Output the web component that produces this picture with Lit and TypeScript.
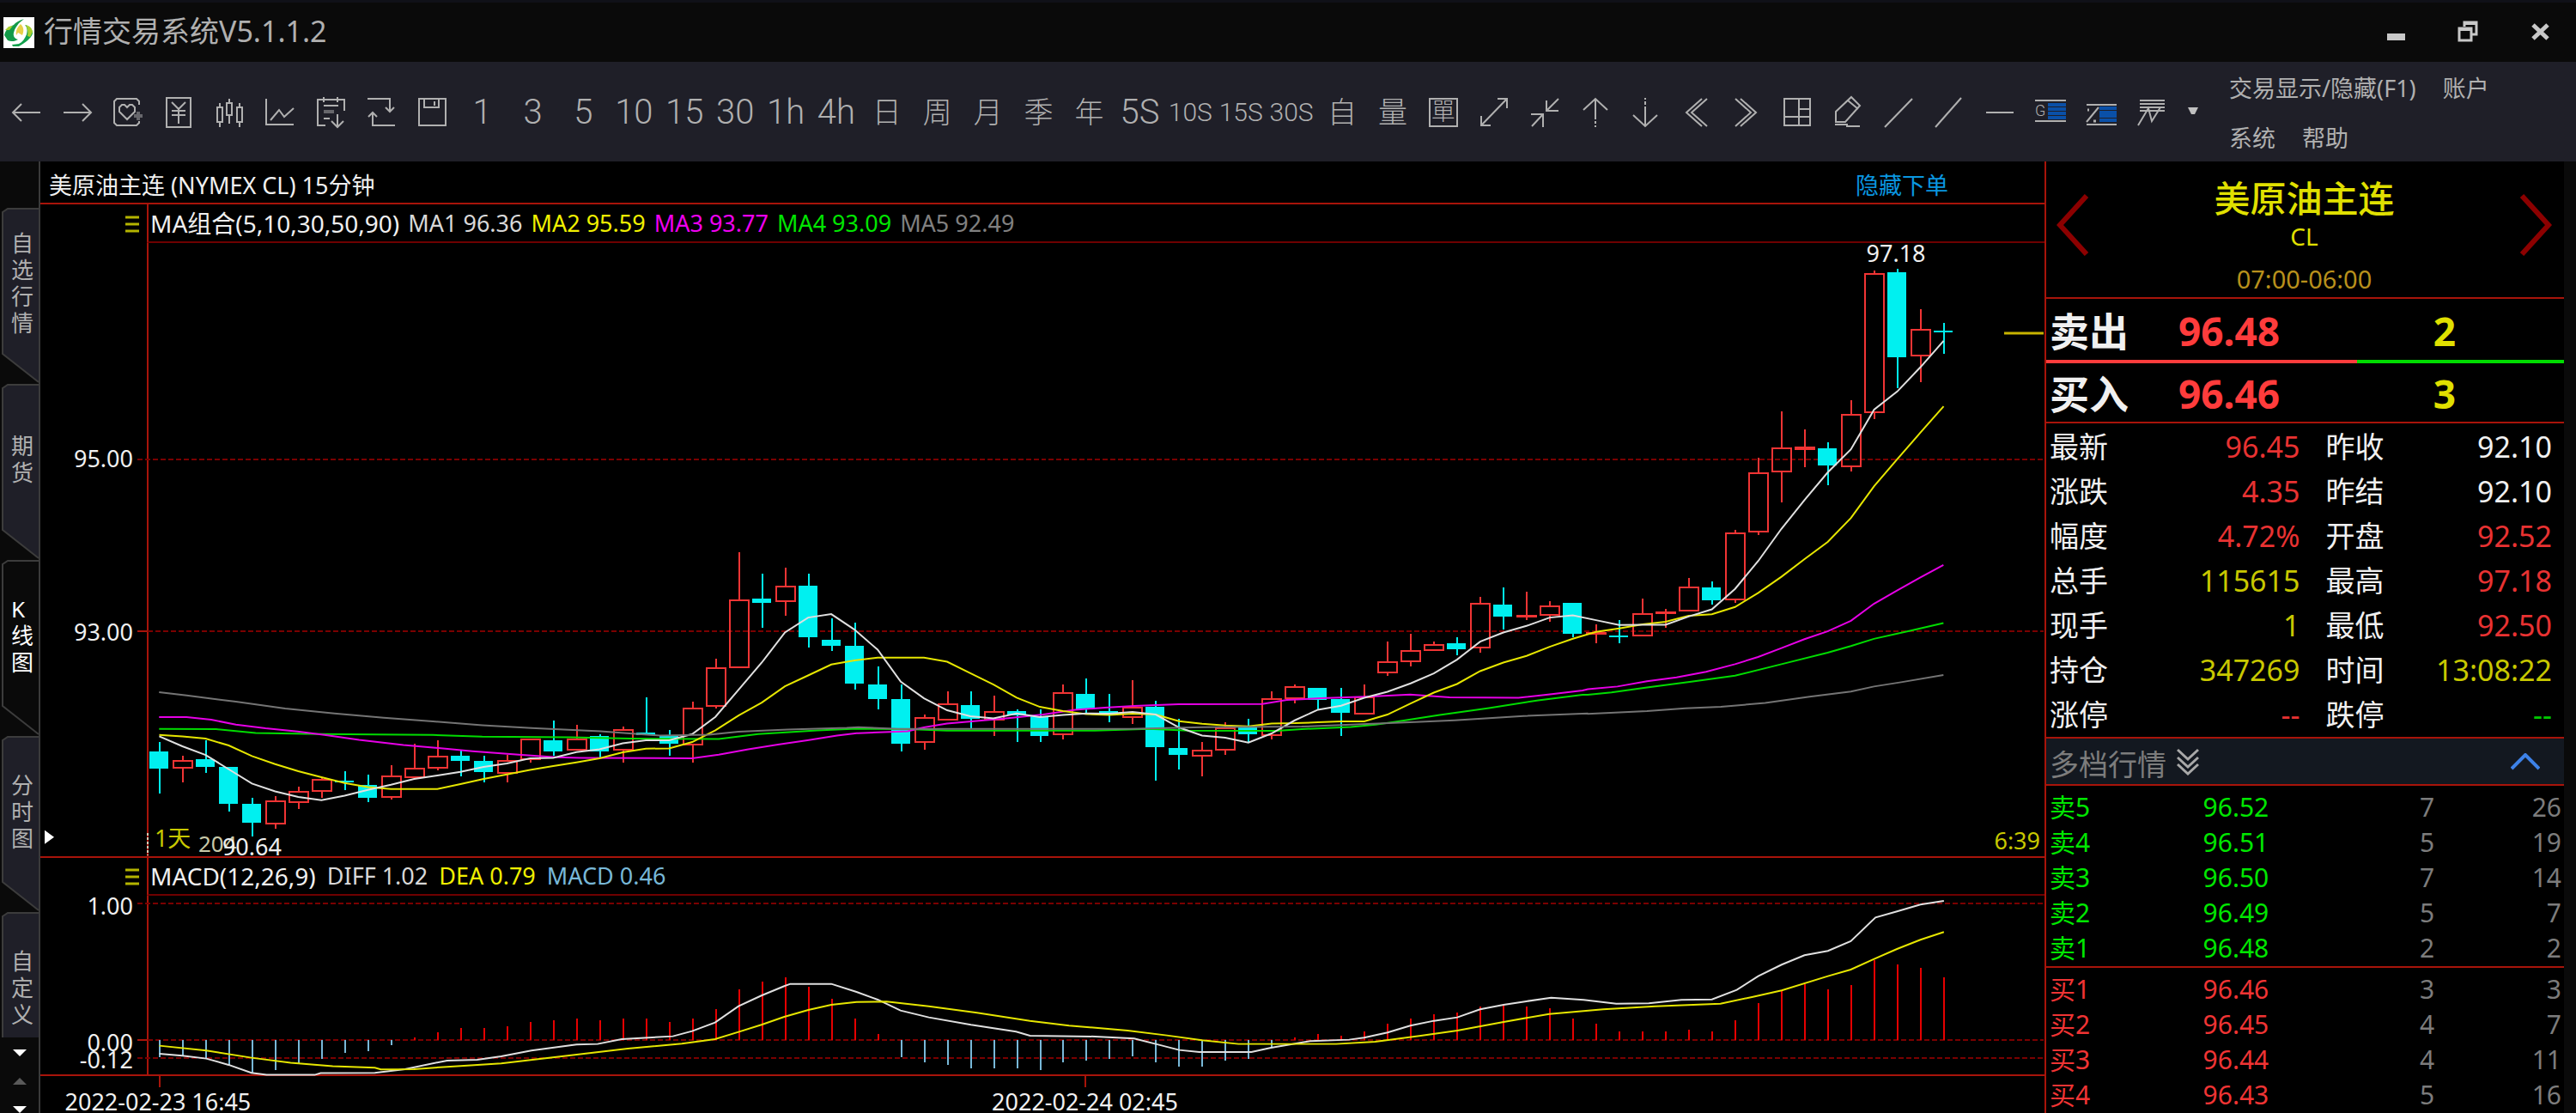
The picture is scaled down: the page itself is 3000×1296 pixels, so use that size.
import { LitElement, html, svg, css, nothing } from "lit";
import { customElement, property, state } from "lit/decorators.js";
import { classMap } from "lit/directives/class-map.js";

/* ---------- chart data ---------- */

type Candle = { up: boolean; top: number; bottom: number; high: number; low: number };
type Point = [number, number];

const FIRST_X = 185.5;
const STEP = 27;
const xAt = (i: number) => FIRST_X + STEP * i;

// Each block of rows is stored on its own grid: page y = base + value / scale.
const candleBlock = (base: number, scale: number, rows: [string, number, number, number, number][]): Candle[] =>
  rows.map(([side, top, bottom, high, low]) => ({
    up: side === "R",
    top: Math.round(base + top / scale),
    bottom: Math.round(base + bottom / scale),
    high: Math.round(base + high / scale),
    low: Math.round(base + low / scale),
  }));

const CANDLES: Candle[] = [
  ...candleBlock(600, 3, [
    ["C", 825, 885, 791, 973], ["R", 855, 885, 840, 933], ["C", 853, 879, 785, 899], ["C", 880, 1007, 880, 1034],
    ["C", 1008, 1075, 988, 1121], ["R", 996, 1080, 982, 1095], ["R", 962, 1005, 948, 1027], ["R", 922, 965, 915, 986],
    ["C", 928, 933, 893, 960], ["C", 941, 987, 907, 1001], ["R", 908, 986, 873, 994], ["R", 882, 917, 798, 917],
    ["R", 841, 885, 785, 892], ["C", 840, 858, 822, 912], ["C", 859, 898, 839, 933], ["R", 855, 904, 837, 934],
    ["R", 780, 854, 780, 865], ["C", 785, 825, 717, 840], ["R", 780, 823, 731, 823], ["C", 770, 824, 765, 848],
    ["R", 747, 823, 738, 865], ["C", 760, 768, 636, 768], ["C", 768, 797, 751, 840], ["R", 672, 803, 651, 865],
    ["R", 531, 668, 502, 675], ["R", 295, 533, 130, 533], ["C", 292, 305, 205, 394], ["R", 246, 304, 184, 352],
    ["C", 245, 427, 205, 461], ["C", 434, 455, 360, 474], ["C", 455, 588, 374, 608], ["C", 590, 643, 529, 677],
  ]),
  ...candleBlock(640, 3, [
    ["C", 523, 678, 470, 706], ["R", 586, 676, 577, 699], ["R", 538, 596, 496, 596], ["C", 543, 591, 496, 627],
    ["R", 565, 597, 510, 652], ["C", 563, 580, 557, 671], ["C", 583, 651, 557, 672], ["R", 497, 649, 470, 664],
    ["C", 503, 557, 450, 575], ["C", 564, 578, 503, 604], ["R", 550, 589, 456, 610], ["C", 550, 691, 529, 806],
    ["C", 692, 718, 591, 767], ["R", 700, 724, 672, 793], ["R", 622, 703, 604, 718], ["C", 622, 644, 591, 676],
    ["R", 519, 650, 496, 662], ["R", 478, 522, 470, 536], ["C", 483, 524, 483, 560], ["C", 523, 571, 483, 652],
    ["R", 512, 575, 470, 575], ["R", 390, 433, 321, 441], ["R", 350, 392, 294, 407], ["R", 330, 353, 320, 353],
    ["C", 328, 347, 307, 368], ["R", 186, 345, 165, 360], ["C", 193, 233, 132, 279], ["R", 228, 238, 146, 246],
    ["R", 194, 231, 180, 252], ["C", 186, 293, 186, 306], ["R", 288, 298, 260, 327], ["C", 300, 306, 246, 327],
  ]),
  ...candleBlock(260, 2.613, [
    ["R", 1186, 1258, 1143, 1258], ["R", 1180, 1189, 1173, 1230], ["R", 1104, 1182, 1079, 1182],
    ["C", 1108, 1148, 1090, 1160], ["R", 940, 1146, 932, 1154], ["R", 757, 940, 714, 948], ["R", 681, 758, 573, 848],
    ["R", 680, 689, 627, 743], ["C", 685, 737, 667, 796], ["R", 581, 741, 538, 754], ["R", 152, 577, 144, 596],
    ["C", 150, 408, 138, 502], ["R", 322, 405, 262, 484], ["C", 326, 331, 302, 397],
  ]),
];

const perCandle = (start: number, base: number, scale: number, values: number[]): Point[] =>
  values.map((v, k) => [xAt(start + k), base + v / scale]);

const free = (x0: number, sx: number, y0: number, sy: number, pts: number[]): Point[] => {
  const out: Point[] = [];
  for (let k = 0; k < pts.length; k += 2) out.push([x0 + pts[k] / sx, y0 + pts[k + 1] / sy]);
  return out;
};

const toPath = (pts: Point[]) => "M" + pts.map(([x, y]) => `${x.toFixed(1)} ${y.toFixed(1)}`).join("L");

const MA: { cls: string; d: string }[] = [
  {
    cls: "ma1",
    d: toPath([
      ...perCandle(0, 600, 3, [773, 808, 838, 888, 938, 965, 985, 996, 980, 960, 942, 922, 910, 897, 880, 868, 850, 848, 828, 818, 797, 787, 787, 765, 705, 610, 515, 410, 358, 346, 400, 470]),
      ...perCandle(32, 640, 3, [462, 520, 562, 583, 590, 573, 586, 578, 573, 574, 568, 577, 622, 650, 658, 675, 643, 597, 560, 546, 518, 497, 468, 433, 385, 322, 290, 267, 238, 230, 247, 264]),
      ...perCandle(64, 260, 2.613, [1222, 1222, 1197, 1175, 1113, 1028, 930, 842, 758, 688, 567, 512, 438, 358]),
    ]),
  },
  {
    cls: "ma2",
    d: toPath([
      ...perCandle(0, 600, 3, [768, 773, 781, 805, 842, 870, 895, 916, 936, 950, 957, 957, 957, 940, 922, 906, 890, 877, 864, 850, 829, 816, 815, 793, 752, 700, 655, 598, 560, 522, 508, 498]),
      ...perCandle(32, 640, 3, [378, 378, 392, 432, 472, 518, 550, 565, 575, 578, 574, 577, 600, 609, 615, 618, 608, 607, 604, 601, 601, 577, 538, 500, 470, 425, 395, 372, 340, 312, 288, 276]),
      ...perCandle(64, 260, 2.613, [1221, 1213, 1195, 1190, 1168, 1125, 1076, 1022, 970, 897, 800, 718, 637, 557]),
    ]),
  },
  {
    cls: "ma3",
    d: toPath([
      ...free(160, 1.742, 600, 3, [44, 706, 100, 706, 150, 715, 200, 732, 260, 745, 325, 756, 380, 768, 450, 785, 540, 803, 600, 812, 680, 825, 780, 838, 850, 846, 900, 848, 1126, 850, 1180, 837, 1240, 818, 1300, 802, 1360, 787, 1420, 770, 1460, 762]),
      ...free(1000, 1.742, 640, 3, [0, 642, 100, 635, 133, 622, 180, 608, 235, 600, 300, 590, 375, 577, 440, 560, 500, 553, 560, 547, 650, 541, 820, 540, 870, 526, 940, 520, 1040, 514, 1120, 507, 1200, 517, 1340, 518, 1400, 507, 1470, 493]),
      ...free(1850, 2.904, 260, 2.613, [0, 1418, 100, 1410, 200, 1394, 300, 1382, 400, 1365, 498, 1342, 576, 1320, 655, 1293, 733, 1266, 811, 1242, 890, 1210, 968, 1158, 1046, 1118, 1125, 1078, 1203, 1040]),
    ]),
  },
  {
    cls: "ma4",
    d: toPath([
      ...free(160, 1.742, 600, 3, [44, 747, 160, 748, 240, 761, 370, 765, 600, 768, 700, 774, 880, 776, 1000, 781, 1180, 782, 1260, 765, 1380, 752, 1460, 746]),
      ...free(1000, 1.742, 640, 3, [0, 627, 100, 628, 180, 633, 480, 633, 590, 627, 670, 633, 850, 634, 900, 628, 1000, 620, 1050, 612, 1090, 602, 1180, 578, 1280, 554, 1380, 527, 1470, 508]),
      ...free(1850, 2.904, 260, 2.613, [0, 1435, 80, 1428, 200, 1413, 350, 1395, 498, 1377, 655, 1342, 811, 1307, 890, 1287, 968, 1265, 1090, 1240, 1203, 1217]),
    ]),
  },
  {
    cls: "ma5",
    d: toPath([
      ...free(160, 1.742, 600, 3, [44, 619, 100, 630, 200, 652, 300, 676, 400, 693, 500, 708, 600, 721, 700, 734, 800, 744, 940, 755, 1060, 770, 1160, 767, 1220, 757, 1320, 749, 1440, 743]),
      ...free(1000, 1.742, 640, 3, [0, 621, 80, 627, 550, 627, 700, 621, 900, 619, 1000, 612, 1130, 603, 1210, 597, 1350, 582, 1480, 573]),
      ...free(1850, 2.904, 260, 2.613, [0, 1493, 200, 1485, 330, 1476, 450, 1472, 600, 1460, 750, 1441, 890, 1425, 968, 1410, 1060, 1397, 1203, 1375]),
    ]),
  },
];

const DIFF = toPath([
  ...free(100, 1.4255, 980, 3, [122, 741, 160, 748, 200, 758, 237, 780, 275, 808, 300, 815, 380, 815, 390, 809, 480, 808, 530, 795, 600, 765, 650, 762, 690, 750, 740, 730, 815, 709, 850, 707, 890, 690, 975, 680, 1007, 662, 1045, 632, 1084, 575, 1122, 538, 1160, 505, 1170, 497, 1238, 497, 1280, 525, 1315, 552, 1353, 590, 1400, 614, 1470, 640, 1545, 664]),
  ...free(1200, 1.3176, 960, 3, [0, 738, 100, 741, 160, 748, 193, 767, 229, 788, 260, 795, 340, 795, 370, 780, 430, 757, 490, 752, 513, 745, 549, 727, 584, 703, 620, 686, 656, 674, 691, 646, 727, 630, 762, 618, 800, 605, 850, 613, 900, 626, 950, 625, 1000, 613, 1047, 611, 1085, 578, 1118, 530, 1154, 490, 1189, 457, 1225, 442, 1260, 408, 1298, 325, 1331, 304, 1367, 280, 1403, 267]),
]);
const DEA = toPath([
  ...free(100, 1.4255, 980, 3, [122, 713, 200, 730, 275, 755, 340, 773, 410, 785, 480, 790, 490, 796, 545, 795, 600, 787, 690, 775, 800, 748, 900, 723, 990, 706, 1045, 690, 1084, 665, 1122, 640, 1160, 612, 1200, 588, 1238, 570, 1280, 560, 1330, 559, 1400, 575, 1480, 598]),
  ...free(1200, 1.3176, 960, 3, [0, 686, 60, 703, 150, 720, 210, 737, 264, 754, 320, 767, 470, 767, 530, 759, 600, 738, 656, 720, 727, 690, 797, 662, 880, 646, 960, 635, 1060, 626, 1110, 602, 1154, 580, 1225, 530, 1260, 507, 1296, 470, 1331, 435, 1367, 403, 1403, 376]),
]);

const ZERO_Y = 1211;
const MACD_BARS: number[] = [
  ...[752, 750, 757, 780, 808, 798, 773, 758, 739, 731, 710, 684, 665, 650, 650, 644, 631, 624, 617, 624, 617, 617, 630, 617, 584, 516, 488, 475, 508, 549, 617, 671, 752, 772, 779, 792, 792, 792].map((v) => 980 + v / 3),
  ...[858, 831, 825, 819, 811, 831, 845, 845, 825, 819, 780, 745, 731, 738, 724, 697, 677, 663, 656, 636, 631, 636, 643, 677, 697, 724, 724, 724, 717, 724, 684, 624, 580, 557, 576, 562, 475, 488, 501, 535].map((v) => 960 + v / 3),
];

/* ---------- toolbar ---------- */

type Tool = { name: string; text?: string; boxed?: boolean; icon?: unknown };

const t = (text: string, boxed = false): Tool => ({ name: text, text, boxed });
const p = (name: string, d: string): Tool => ({ name, icon: svg`<path d=${d} />` });

const TOOLS: Tool[] = [
  p("后退", "M34 18H2M12 8L2 18L12 28"),
  p("前进", "M2 18H34M24 8L34 18L24 28"),
  {
    name: "加自选",
    icon: svg`<path d="M31 9V5L28 2H5L2 5V30L5 33H28L31 30V28"/><path d="M17 26L8 17V12L11 9H14L17 12L20 9H23L26 12V17Z"/><path class="dim" d="M30 17V27M25 22H35"/>`,
  },
  p("报价", "M4 1H32V35H4ZM10 6L18 14L26 6M18 14V31M10 16H26M10 21H26"),
  p("K线", "M7 7V12M4 12H10V29H4ZM7 29V35M18 2V7M15 7H21V21H15ZM18 21V31M30 7V12M27 12H33V29H27ZM30 29V35"),
  p("分时", "M2 2V32H34M7 27L17 15L23 23L34 13"),
  {
    name: "下载",
    icon: svg`<path d="M12 33H3V3H34V16M10 0V6M26 0V6M10 10H27M26 20V35M19 28L26 35L33 28M10 25H17"/><path class="dim" d="M10 17H22"/>`,
  },
  p("刷新", "M2 2H28V17M23 12L28 17L33 12M34 33H8V18M3 23L8 18L13 23"),
  p("保存", "M3 2H34V33H3ZM9 2V12H26V2M21 5V10"),
  ...["1", "3", "5", "10", "15", "30", "1h", "4h", "日", "周", "月", "季", "年", "5S", "10S", "15S", "30S", "自", "量"].map((s) => t(s)),
  t("單", true),
  p("放大", "M3 33L33 2M22 2H33V13M3 22V33H14"),
  p("缩小", "M34 2L20 16M20 4V16H34M3 34L16 20M2 20H16V35"),
  p("上移", "M18 2V26M18 28V31M18 33V35M4 15L18 2L32 15"),
  p("下移", "M18 1V3M18 5V9M18 11V34M4 21L18 34L32 21"),
  p("左翻", "M25 2L7 18L25 34M31 2L13 18L31 34"),
  p("右翻", "M11 2L29 18L11 34M5 2L23 18L5 34"),
  p("多窗", "M3 2H33V33H3ZM20 2V33M3 23H33M20 14H33"),
  p("画笔", "M22 0L32 10L15 29H4V17ZM18 4L30 14M3 32H17V34H32"),
  p("线段", "M2 35L34 2"),
  p("直线", "M2 35L32 1"),
  p("水平线", "M2 18H34"),
  {
    name: "黄金分割",
    icon: svg`<path d="M0 4H36M0 28H36"/><path class="blue" d="M15 9H36M15 14H36M15 19H36M15 24H36"/><text x="0" y="22">G</text>`,
  },
  {
    name: "百分比线",
    icon: svg`<path d="M1 9H36M1 32H36M1 29L15 12"/><path class="blue" d="M16 13H36M16 18H36M16 22H36M16 27H36"/><path class="thin" d="M2 15H4M9 28H12"/>`,
  },
  p("波浪线", "M4 4H33M4 8H33M4 12H33M4 16H33M2 33L14 13L18 28L28 12"),
];

/* ---------- quote data ---------- */

const STATS: [string, string, string, string, string, string][] = [
  ["最新", "96.45", "red", "昨收", "92.10", "white"],
  ["涨跌", "4.35", "red", "昨结", "92.10", "white"],
  ["幅度", "4.72%", "red", "开盘", "92.52", "red"],
  ["总手", "115615", "yellow", "最高", "97.18", "red"],
  ["现手", "1", "yellow", "最低", "92.50", "red"],
  ["持仓", "347269", "yellow", "时间", "13:08:22", "yellow"],
  ["涨停", "--", "red", "跌停", "--", "green"],
];

const ASKS = [
  ["卖5", "96.52", "7", "26"],
  ["卖4", "96.51", "5", "19"],
  ["卖3", "96.50", "7", "14"],
  ["卖2", "96.49", "5", "7"],
  ["卖1", "96.48", "2", "2"],
];
const BIDS = [
  ["买1", "96.46", "3", "3"],
  ["买2", "96.45", "4", "7"],
  ["买3", "96.44", "4", "11"],
  ["买4", "96.43", "5", "16"],
];

const reset = css`
  * {
    box-sizing: border-box;
  }
  button {
    margin: 0;
    padding: 0;
    border: 0;
    background: none;
    color: inherit;
    font: inherit;
    cursor: pointer;
  }
  svg {
    display: block;
  }
`;

/* ---------- title bar and toolbar ---------- */

@customElement("top-bar")
class TopBar extends LitElement {
  static styles = [
    reset,
    css`
      :host {
        display: block;
        color: #b0b0b0;
      }
      .title {
        display: flex;
        align-items: center;
        height: 72px;
        padding: 0 30px 0 4px;
        border-top: 3px solid #101118;
        background: #0a0a0a;
        font-size: 34px;
      }
      .logo {
        width: 36px;
        height: 36px;
        margin-right: 11px;
      }
      .name {
        flex: 1;
        margin: 0;
        font-size: 34px;
        line-height: 44px;
        font-weight: 400;
        white-space: nowrap;
        padding-bottom: 4px;
      }
      .window {
        display: flex;
        gap: 60px;
        padding-bottom: 4px;
      }
      .window svg {
        width: 24px;
        height: 26px;
        fill: none;
        stroke: #c8c8c8;
        stroke-width: 3;
      }
      .tools {
        display: flex;
        align-items: stretch;
        height: 116px;
        background: #1f1f28;
      }
      .icons {
        flex: 1;
        display: grid;
        grid-template-columns: repeat(43, minmax(0, 1fr));
        align-items: center;
        padding: 2px 0 0 2px;
      }
      .icons button {
        display: flex;
        align-items: center;
        justify-content: center;
        height: 60px;
        white-space: nowrap;
        font-family: Roboto, "Noto Sans CJK SC", sans-serif;
        font-size: 34px;
        font-weight: 300;
        line-height: 40px;
      }
      .icons .latin {
        font-size: 40px;
      }
      .icons .wide {
        font-size: 30px;
      }
      .icons svg {
        width: 36px;
        height: 36px;
        overflow: visible;
        fill: none;
        stroke: #b0b0b0;
        stroke-width: 2;
      }
      .icons .dim {
        opacity: 0.5;
        stroke-width: 4;
      }
      .icons .thin {
        stroke-width: 3;
      }
      .icons .blue {
        stroke: #0a50a8;
        stroke-width: 4;
      }
      .icons text {
        fill: #b0b0b0;
        stroke: none;
        font-size: 18px;
      }
      .boxed {
        display: block;
        width: 34px;
        height: 34px;
        border: 2px solid #b0b0b0;
        font-size: 28px;
        line-height: 29px;
        text-align: center;
      }
      .more {
        width: 38px;
      }
      .more svg {
        width: 12px;
        height: 10px;
        margin: 0 auto;
        fill: #c0c0c0;
      }
      .menu {
        display: flex;
        flex-wrap: wrap;
        align-content: flex-start;
        column-gap: 31px;
        width: 427px;
        padding: 2px 60px 0 23px;
        font-size: 27px;
        line-height: 58px;
      }
      .menu a {
        color: inherit;
        text-decoration: none;
        white-space: nowrap;
      }
    `,
  ];

  render() {
    return html`
      <header class="title">
        <svg class="logo" viewBox="0 0 36 36" aria-hidden="true">
          <rect width="36" height="36" fill="#fff" />
          <path fill="#129a48" d="M24 2C18 4 14 6 12 9 6 11 2 16 1 21l4 6c4 2 9 1 12-1-4-1-6-4-5-8 1-5 4-8 6-11z" />
          <path fill="#12a04c" d="M25 9c3 3 3 7 2 11-2 5-5 9-9 11l-8 1 1 2h7c8-5 14-9 16-15 0-5-4-9-9-10z" />
          <path fill="#a8d030" d="M26 9c4 1 7 3 8 8l-3 6-3-1c1-5 0-9-2-13zM2 15l4-4 5-1-4 5z" />
          <path fill="#e8d048" d="M20 8c4 4 4 8 2 13l-5-3-2 3c-1-5 1-9 5-13z" />
        </svg>
        <h1 class="name">行情交易系统V5.1.1.2</h1>
        <div class="window">
          <button aria-label="最小化"><svg viewBox="0 0 24 26"><path d="M2 20H23" stroke-width="8" /></svg></button>
          <button aria-label="还原">
            <svg viewBox="0 0 24 26"><path d="M8 8V3H22V17H17M2 10H16V24H2Z" /><path d="M2 11H16M8 4H22" stroke-width="4" /></svg>
          </button>
          <button aria-label="关闭"><svg viewBox="0 0 24 26"><path d="M4 6L21 22M21 6L4 22" stroke-width="5" /></svg></button>
        </div>
      </header>
      <div class="tools">
        <div class="icons">
          ${TOOLS.map(
            (tool) => html`<button
              title=${tool.name}
              class=${classMap({
                latin: /^\w{1,2}$/.test(tool.text ?? ""),
                wide: (tool.text?.length ?? 0) > 2,
              })}
            >
              ${tool.text
                ? html`<span class=${classMap({ boxed: !!tool.boxed })}>${tool.text}</span>`
                : html`<svg viewBox="0 0 36 36" aria-hidden="true">${tool.icon}</svg>`}
            </button>`
          )}
        </div>
        <button class="more" aria-label="更多工具"><svg viewBox="0 0 12 10"><path d="M0 0H12L8 8H4Z" /></svg></button>
        <nav class="menu">
          <a href="#trade">交易显示/隐藏(F1)</a>
          <a href="#account">账户</a>
          <a href="#system">系统</a>
          <a href="#help">帮助</a>
        </nav>
      </div>
    `;
  }
}

/* ---------- left tabs ---------- */

@customElement("side-tabs")
class SideTabs extends LitElement {
  @state() private active = 2;
  private tabs = ["自选行情", "期货", "K线图", "分时图", "自定义"];

  static styles = [
    reset,
    css`
      :host {
        display: flex;
        flex-direction: column;
        width: 47px;
        background: #0a0a0a;
        color: #b0b0b0;
      }
      .list {
        flex: 1 1 0;
        min-height: 0;
        display: flex;
        flex-direction: column;
        overflow: hidden;
        padding-top: 54px;
        border-right: 2px solid #3a3a3a;
      }
      .tab {
        flex: none;
        display: grid;
        width: 45px;
        height: 205px;
      }
      .tab svg,
      .label {
        grid-area: 1 / 1;
      }
      .tab svg {
        width: 45px;
        height: 205px;
        fill: #1f1f28;
        stroke: #3c3c3c;
        stroke-width: 2;
      }
      .label {
        place-self: start end;
        display: flex;
        align-items: center;
        width: 32px;
        height: 176px;
        padding-right: 6px;
        font-size: 26px;
        line-height: 31px;
        text-align: left;
        word-break: break-all;
      }
      .on {
        color: #fff;
      }
      .on svg {
        fill: #0a0a0a;
      }
      .scroll {
        display: flex;
        flex-direction: column;
        align-items: center;
        justify-content: space-between;
        height: 88px;
        padding-top: 14px;
        border-right: 2px solid #3a3a3a;
      }
      .scroll svg {
        width: 16px;
        height: 8px;
        fill: #fff;
      }
      .scroll .off {
        fill: #5a5a5a;
      }
    `,
  ];

  render() {
    return html`
      <nav class="list">
        ${this.tabs.map(
          (tab, i) => html`<button
            class=${classMap({ tab: true, on: i === this.active })}
            aria-pressed=${i === this.active}
            @click=${() => (this.active = i)}
          >
            <svg viewBox="0 0 45 205" aria-hidden="true"><path d="M45 1H9L3 5V170L45 203" /></svg>
            <span class="label"><span>${tab}</span></span>
          </button>`
        )}
      </nav>
      <div class="scroll">
        <button aria-label="向下"><svg viewBox="0 0 16 8"><path d="M0 0H16L8 8Z" /></svg></button>
        <button aria-label="向上"><svg class="off" viewBox="0 0 16 8"><path d="M0 8H16L8 0Z" /></svg></button>
        <button aria-label="到底"><svg viewBox="0 0 16 8"><path d="M0 0H16L8 8Z" /></svg></button>
      </div>
    `;
  }
}

/* ---------- charts ---------- */

@customElement("chart-pane")
class ChartPane extends LitElement {
  static styles = [
    reset,
    css`
      :host {
        display: block;
        min-width: 0;
        background: #000;
        color: #f0f0f0;
        font-size: 27px;
      }
      .head {
        display: flex;
        align-items: center;
        justify-content: space-between;
        height: 50px;
        padding: 4px 112px 0 10px;
        border-bottom: 2px solid #a8140a;
        white-space: nowrap;
      }
      .head h2 {
        margin: 0;
        font-size: 27px;
        font-weight: 400;
      }
      .order {
        color: #0a96e0;
      }
      .legend {
        display: grid;
        grid-template-columns: 124px minmax(0, 1fr);
        height: 45px;
      }
      .legend.lower {
        height: 44px;
      }
      .grip {
        justify-self: end;
        align-self: center;
        width: 16px;
        height: 20px;
        margin-right: 9px;
      }
      .grip svg {
        width: 16px;
        height: 20px;
        stroke: #b4b400;
        stroke-width: 3;
      }
      .items {
        display: flex;
        align-items: center;
        gap: 10px;
        padding-left: 2px;
        border-left: 2px solid #a8140a;
        border-bottom: 2px solid #6e0000;
        line-height: 42px;
        white-space: nowrap;
        overflow: hidden;
      }
      .lower .items {
        gap: 13px;
      }
      .first {
        font-size: 28px;
      }
      .plot {
        width: 100%;
        height: auto;
        overflow: visible;
      }
      .plot text {
        fill: #f0f0f0;
        font-size: 27px;
      }
      .end {
        text-anchor: end;
      }
      .mid {
        text-anchor: middle;
      }
      .frame,
      .axis,
      .dash,
      .dots,
      .up,
      .down,
      .solid,
      .bar-up,
      .bar-down {
        shape-rendering: crispEdges;
      }
      .frame,
      .axis {
        stroke: #a8140a;
        stroke-width: 2;
      }
      .dash {
        stroke: #7a0000;
        stroke-width: 2;
        stroke-dasharray: 6 3;
      }
      .dots {
        stroke: #d8c8b0;
        stroke-width: 2;
        stroke-dasharray: 3 2;
      }
      .mark {
        stroke: #c8b400;
        stroke-width: 3;
      }
      .up {
        fill: none;
        stroke: #f03434;
        stroke-width: 2;
      }
      .solid {
        fill: #f03434;
      }
      .down {
        fill: #00f0f0;
        stroke: #00f0f0;
        stroke-width: 2;
      }
      .body {
        stroke: none;
      }
      .line {
        fill: none;
        stroke-width: 2;
      }
      .line.ma1 {
        stroke: #e0e0e0;
      }
      .line.ma2 {
        stroke: #e6e600;
      }
      .line.ma3 {
        stroke: #e600e6;
      }
      .line.ma4 {
        stroke: #00dc00;
      }
      .line.ma5 {
        stroke: #747474;
      }
      .bar-up {
        stroke: #e60000;
        stroke-width: 2;
      }
      .bar-down {
        stroke: #78b8d8;
        stroke-width: 2;
      }
      .c1 {
        color: #d8d8d8;
      }
      .c2 {
        color: #f0f000;
      }
      .c3 {
        color: #f000f0;
      }
      .c4 {
        color: #00e600;
      }
      .c5 {
        color: #808080;
      }
      .c6 {
        color: #78b8d8;
      }
      .plot .gold {
        fill: #c8c800;
      }
      .plot .count {
        fill: #c8c8a8;
        font-size: 26px;
      }
      .arrow {
        fill: #fff;
      }
      .divider {
        border-top: 2px solid #a8140a;
      }
    `,
  ];

  private candle(c: Candle, i: number) {
    const x = Math.round(xAt(i));
    const h = c.bottom - c.top;
    if (!c.up) {
      return svg`<g class="down"><path d="M${x} ${c.high}V${c.low}" /><rect class="body" x=${x - 12} y=${c.top} width="22" height=${Math.max(2, h)} /></g>`;
    }
    const wick = svg`<path class="up" d="M${x} ${c.high}V${c.top}M${x} ${c.bottom}V${c.low}" />`;
    return h < 5
      ? svg`${wick}<rect class="solid" x=${x - 12} y=${c.top} width="24" height=${h} />`
      : svg`${wick}<rect class="up" x=${x - 11} y=${c.top + 1} width="22" height=${h - 2} />`;
  }

  private grip() {
    return html`<button class="grip" aria-label="指标设置">
      <svg viewBox="0 0 16 20"><path d="M0 2H16M0 10H16M0 18H16" /></svg>
    </button>`;
  }

  render() {
    return html`
      <div class="head">
        <h2>美原油主连 (NYMEX CL) 15分钟</h2>
        <button class="order">隐藏下单</button>
      </div>
      <div class="legend">
        ${this.grip()}
        <div class="items">
          <span class="first">MA组合(5,10,30,50,90)</span>
          <span class="c1">MA1 96.36</span>
          <span class="c2">MA2 95.59</span>
          <span class="c3">MA3 93.77</span>
          <span class="c4">MA4 93.09</span>
          <span class="c5">MA5 92.49</span>
        </div>
      </div>
      <svg class="plot" viewBox="47 283 2335 714" role="img" aria-label="K线图">
        <path class="axis" d="M172 283V997M160 735H172" />
        <path class="dash" d="M160 535H2381M172 735H2381" />
        <path class="dots" d="M172 970V996" />
        <text class="end" x="155" y="544">95.00</text>
        <text class="end" x="155" y="746">93.00</text>
        ${CANDLES.map((c, i) => this.candle(c, i))}
        ${MA.slice()
          .reverse()
          .map((m) => (m.cls === "ma5" ? nothing : svg`<path class="line ${m.cls}" d=${m.d} />`))}
        <path class="line ma5" d=${MA[4].d} />
        <path class="mark" d="M2335 388H2381" />
        <path class="arrow" d="M52 967L63 975L52 983Z" />
        <text class="gold" x="180" y="986">1天</text>
        <text class="count" x="231" y="992">204</text>
        <text x="259" y="996">90.64</text>
        <text class="mid" x="2209" y="305">97.18</text>
        <text class="end gold" x="2377" y="989">6:39</text>
      </svg>
      <div class="divider"></div>
      <div class="legend lower">
        ${this.grip()}
        <div class="items">
          <span class="first">MACD(12,26,9)</span>
          <span class="c1">DIFF 1.02</span>
          <span class="c2">DEA 0.79</span>
          <span class="c6">MACD 0.46</span>
        </div>
      </div>
      <svg class="plot" viewBox="47 1043 2335 253" role="img" aria-label="MACD">
        <path class="axis" d="M172 1043V1252M160 1211H172M186 1252V1266M1265 1252V1266" />
        <path class="frame" d="M47 1252H2382" />
        <path class="dash" d="M160 1052H2381M172 1211H2381M160 1232H2381" />
        <text class="end" x="155" y="1065">1.00</text>
        <text class="end" x="155" y="1224">0.00</text>
        <text class="end" x="155" y="1244">-0.12</text>
        ${MACD_BARS.map(
          (y, i) => svg`<path class=${y < ZERO_Y ? "bar-up" : "bar-down"} d="M${Math.round(xAt(i))} ${ZERO_Y}V${Math.round(y)}" />`
        )}
        <path class="line ma1" d=${DIFF} />
        <path class="line ma2" d=${DEA} />
        <text class="mid" x="184" y="1293">2022-02-23 16:45</text>
        <text class="mid" x="1264" y="1293">2022-02-24 02:45</text>
      </svg>
    `;
  }
}

/* ---------- quote panel ---------- */

@customElement("quote-panel")
class QuotePanel extends LitElement {
  @property({ type: Boolean }) collapsed = false;

  static styles = [
    reset,
    css`
      :host {
        display: block;
        border-left: 2px solid #a8140a;
        background: #000;
        color: #f0f0f0;
        font-size: 34px;
      }
      .head {
        display: flex;
        align-items: center;
        justify-content: space-between;
        height: 160px;
        padding: 0 14px 0 12px;
        border-bottom: 2px solid #a8140a;
      }
      .head svg {
        width: 38px;
        height: 72px;
        margin-top: -10px;
        fill: none;
        stroke: #8c0000;
        stroke-width: 6;
      }
      .names {
        display: flex;
        flex-direction: column;
        align-items: center;
        padding-top: 20px;
        color: #e0e000;
        font-size: 28px;
        line-height: 38px;
      }
      .names h2 {
        margin: 0;
        font-family: "Liberation Serif", "Noto Sans CJK SC", serif;
        font-size: 42px;
        line-height: 46px;
        font-weight: 500;
      }
      .hours {
        padding-top: 12px;
        color: #b8901c;
        font-size: 29px;
      }
      .deal {
        display: grid;
        grid-template-columns: 150px minmax(0, 1fr) 278px;
        align-items: center;
        height: 71px;
        padding-top: 2px;
        padding-left: 4px;
        font-size: 46px;
        line-height: 60px;
        font-weight: 700;
      }
      .deal.buy {
        height: 70px;
        border-bottom: 2px solid #a8140a;
      }
      .price {
        color: #ff3c3c;
      }
      .count {
        color: #e0e000;
        text-align: center;
      }
      .ratio {
        display: flex;
        height: 4px;
        background: #00dc00;
      }
      .ratio i {
        width: 60%;
        background: #ff3c3c;
      }
      table {
        width: 100%;
        border-collapse: collapse;
        table-layout: fixed;
      }
      th,
      td {
        padding: 0;
        font-weight: 400;
        text-align: right;
        white-space: nowrap;
      }
      th {
        text-align: left;
      }
      .stats {
        padding-top: 1px;
        border-bottom: 2px solid #a8140a;
      }
      .stats th,
      .stats td {
        height: 52px;
        line-height: 50px;
      }
      .stats th {
        width: 25%;
        padding-left: 4px;
      }
      .stats td {
        width: 24%;
      }
      .stats td + th {
        padding-left: 30px;
      }
      .stats td + th + td {
        width: 26%;
        padding-right: 14px;
      }
      .depth {
        display: flex;
        align-items: center;
        height: 55px;
        padding: 0 28px 0 4px;
        border-bottom: 2px solid #a8140a;
        background: #131820;
        color: #7c7c7c;
      }
      .depth h3 {
        margin: 0;
        padding-top: 6px;
        font-size: 34px;
        line-height: 44px;
        font-weight: 400;
      }
      .depth svg {
        fill: none;
      }
      .more {
        width: 26px;
        height: 32px;
        margin-left: 12px;
        stroke: #a8a8a8;
        stroke-width: 3;
      }
      .fold {
        margin-left: auto;
      }
      .fold svg {
        width: 34px;
        height: 20px;
        stroke: #3d82e8;
        stroke-width: 4;
      }
      .book {
        padding: 4px 0 1px;
        font-size: 30px;
      }
      .book th,
      .book td {
        height: 41px;
        line-height: 40px;
        color: #7c7c7c;
      }
      .book th {
        width: 16%;
        padding-left: 4px;
      }
      .book td:nth-child(2) {
        width: 27%;
      }
      .book td:nth-child(3) {
        width: 32%;
      }
      .book td:nth-child(4) {
        padding-right: 3px;
      }
      .asks {
        border-bottom: 2px solid #a8140a;
      }
      .book.asks th,
      .book.asks td:nth-child(2) {
        color: #00e600;
      }
      .book.bids th,
      .book.bids td:nth-child(2) {
        color: #f03434;
      }
      .red {
        color: #e83232;
      }
      .yellow {
        color: #c8c800;
      }
      .green {
        color: #00c800;
      }
      .white {
        color: #f0f0f0;
      }
    `,
  ];

  private book(cls: string, rows: string[][]) {
    return html`<div class="book ${cls}">
      <table>
        ${rows.map(
          ([label, price, count, total]) =>
            html`<tr>
              <th scope="row">${label}</th>
              <td>${price}</td>
              <td>${count}</td>
              <td>${total}</td>
            </tr>`
        )}
      </table>
    </div>`;
  }

  render() {
    return html`
      <section class="head">
        <button aria-label="上一个"><svg viewBox="0 0 38 72"><path d="M35 2L4 36L35 70" /></svg></button>
        <div class="names">
          <h2>美原油主连</h2>
          <span>CL</span>
          <span class="hours">07:00-06:00</span>
        </div>
        <button aria-label="下一个"><svg viewBox="0 0 38 72"><path d="M3 2L34 36L3 70" /></svg></button>
      </section>
      <div class="deal">
        <span>卖出</span><span class="price">96.48</span><span class="count">2</span>
      </div>
      <div class="ratio"><i></i></div>
      <div class="deal buy">
        <span>买入</span><span class="price">96.46</span><span class="count">3</span>
      </div>
      <div class="stats">
        <table>
          ${STATS.map(
            ([l1, v1, c1, l2, v2, c2]) =>
              html`<tr>
                <th scope="row">${l1}</th>
                <td class=${c1}>${v1}</td>
                <th scope="row">${l2}</th>
                <td class=${c2}>${v2}</td>
              </tr>`
          )}
        </table>
      </div>
      <div class="depth">
        <h3>多档行情</h3>
        <svg class="more" viewBox="0 0 26 32" aria-hidden="true"><path d="M1 2L13 13L25 2M1 11L13 22L25 11M1 19L13 30L25 19" /></svg>
        <button
          class="fold"
          aria-label="收起"
          aria-expanded=${!this.collapsed}
          @click=${() => (this.collapsed = !this.collapsed)}
        >
          <svg viewBox="0 0 34 20"><path d="M1 18L17 2L33 18" /></svg>
        </button>
      </div>
      ${this.collapsed ? nothing : html`${this.book("asks", ASKS)}${this.book("bids", BIDS)}`}
    `;
  }
}

/* ---------- page ---------- */

@customElement("app-root")
class AppRoot extends LitElement {
  static styles = [
    reset,
    css`
      :host {
        display: block;
        min-height: 100vh;
        background: #0a0a0a;
        font-family: "Noto Sans", "Noto Sans CJK SC", sans-serif;
      }
      .body {
        display: grid;
        grid-template-columns: 47px minmax(0, 1fr) 605px;
        padding-right: 14px;
      }
    `,
  ];

  render() {
    return html`
      <top-bar></top-bar>
      <main class="body">
        <side-tabs></side-tabs>
        <chart-pane></chart-pane>
        <quote-panel></quote-panel>
      </main>
    `;
  }
}
